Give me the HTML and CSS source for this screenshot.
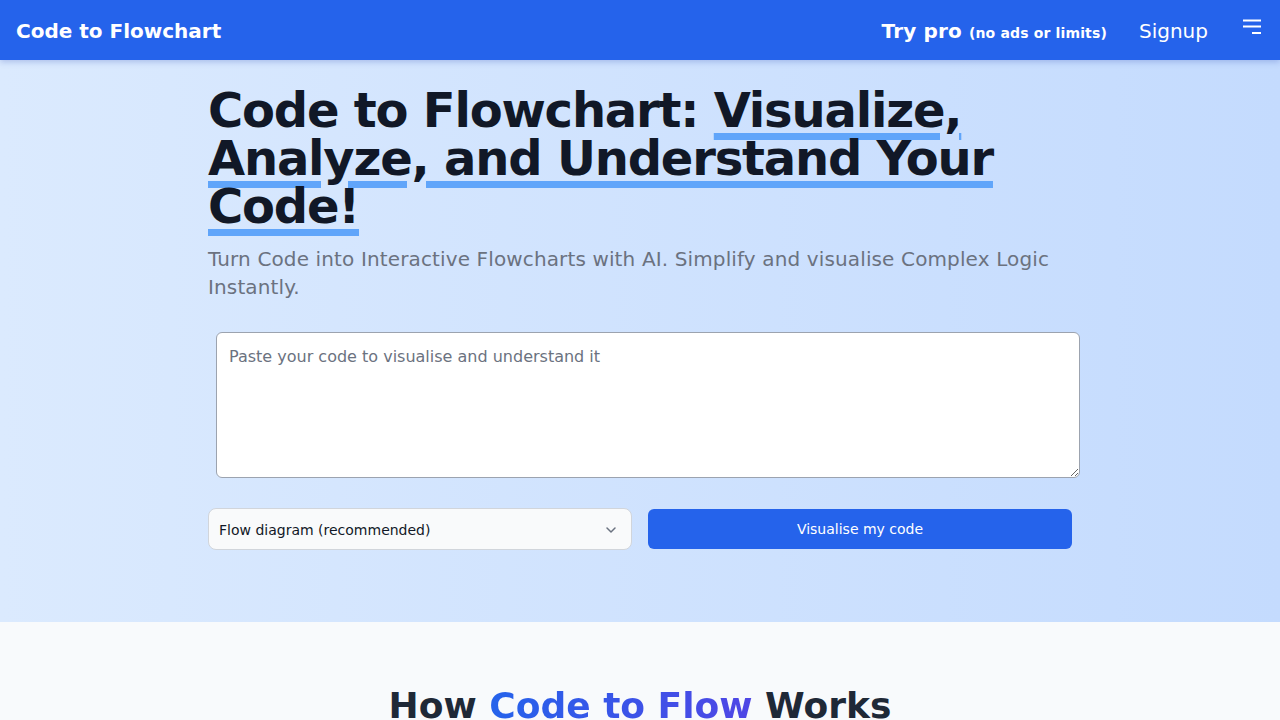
FILE: index.html
```html
<!DOCTYPE html>
<html lang="en">
<head>
<meta charset="utf-8">
<title>Code to Flowchart</title>
<link rel="stylesheet" href="styles.css">
</head>
<body>
<header class="topbar">
  <a class="brand" href="#">Code to Flowchart</a>
  <nav class="nav">
    <a class="pro" href="#">Try pro <span class="pro-note">(no ads or limits)</span></a>
    <a class="signup" href="#">Signup</a>
    <button class="menu" aria-label="Menu">
      <svg width="20" height="16" viewBox="0 0 20 16"><path d="M1 2.5h18M1 8.5h18M10 15h9" stroke="#fff" stroke-width="2" fill="none"/></svg>
    </button>
  </nav>
</header>
<section class="hero">
  <div class="container">
    <h1 class="title">Code to Flowchart: <span class="mark">Visualize, Analyze, and Understand Your Code!</span></h1>
    <p class="subtitle">Turn Code into Interactive Flowcharts with AI. Simplify and visualise Complex Logic Instantly.</p>
    <textarea class="code" placeholder="Paste your code to visualise and understand it"></textarea>
    <div class="actions">
      <div class="select">
        <span>Flow diagram (recommended)</span>
        <svg width="12" height="8" viewBox="0 0 12 8"><path d="M2 2l4 4 4-4" stroke="#6b7280" stroke-width="1.5" fill="none" stroke-linecap="round" stroke-linejoin="round"/></svg>
      </div>
      <button class="go">Visualise my code</button>
    </div>
  </div>
</section>
<section class="how">
  <h2 class="how-title">How <span class="grad">Code to Flow</span> Works</h2>
</section>
</body>
</html>
```
FILE: styles.css
```css
* { box-sizing: border-box; }
html, body { margin: 0; padding: 0; }
body {
  font-family: "DejaVu Sans", sans-serif;
  background: #f8fafc;
  color: #111827;
}
a { text-decoration: none; color: inherit; }
.topbar {
  height: 60px;
  background: #2563eb;
  color: #fff;
  display: flex;
  align-items: center;
  justify-content: space-between;
  padding: 2px 18px 0 16px;
  box-shadow: 0 2px 6px rgba(30, 64, 175, 0.25);
  position: relative;
  z-index: 2;
}
.brand { font-size: 20px; font-weight: bold; }
.nav { display: flex; align-items: center; }
.pro { font-size: 20px; font-weight: bold; letter-spacing: 0.15px; }
.pro-note { font-size: 14px; }
.signup { font-size: 20px; margin-left: 32px; }
.menu {
  background: none; border: 0; padding: 0; margin-left: 34px;
  display: flex; align-items: center; height: 20px; margin-top: -10px;
}
.hero {
  background: linear-gradient(to right, #dbeafe, #c4dbfe);
  height: 562px;
  padding-top: 26px;
}
.container {
  width: 864px;
  margin: 0 auto;
}
.title {
  margin: 0;
  font-size: 48px;
  line-height: 48px;
  font-weight: bold;
  letter-spacing: -0.025em;
  color: #111827;
}
.mark {
  text-decoration: underline;
  text-decoration-color: #60a5fa;
  text-decoration-thickness: 7px;
  text-underline-offset: 6px;
}
.subtitle {
  margin: 15px 0 0;
  font-size: 20px;
  line-height: 28px;
  letter-spacing: 0.13px;
  color: #6b7280;
}
.code {
  display: block;
  width: 864px;
  height: 146px;
  margin: 31px 0 0 8px;
  padding: 12px;
  font-family: "DejaVu Sans", sans-serif;
  font-size: 16px;
  line-height: 24px;
  border: 1px solid #9ca3af;
  border-radius: 6px;
  background: #fff;
  resize: vertical;
}
.code::placeholder { color: #6b7280; }
.actions {
  display: grid;
  grid-template-columns: 1fr 1fr;
  gap: 16px;
  margin-top: 30px;
  align-items: center;
}
.select {
  height: 42px;
  background: #f9fafb;
  border: 1px solid #d1d5db;
  border-radius: 8px;
  display: flex;
  align-items: center;
  justify-content: space-between;
  padding: 1px 14px 0 10px;
  font-size: 14px;
  color: #111827;
}
.go {
  height: 40px;
  background: #2563eb;
  color: #fff;
  border: 0;
  border-radius: 6px;
  font-family: "DejaVu Sans", sans-serif;
  font-size: 14px;
}
.how {
  padding-top: 64px;
  text-align: center;
}
.how-title {
  margin: 0;
  font-size: 36px;
  line-height: 40px;
  font-weight: bold;
  color: #1f2937;
}
.grad {
  background: linear-gradient(to right, #2563eb, #4f46e5);
  -webkit-background-clip: text;
  background-clip: text;
  color: transparent;
}
```
